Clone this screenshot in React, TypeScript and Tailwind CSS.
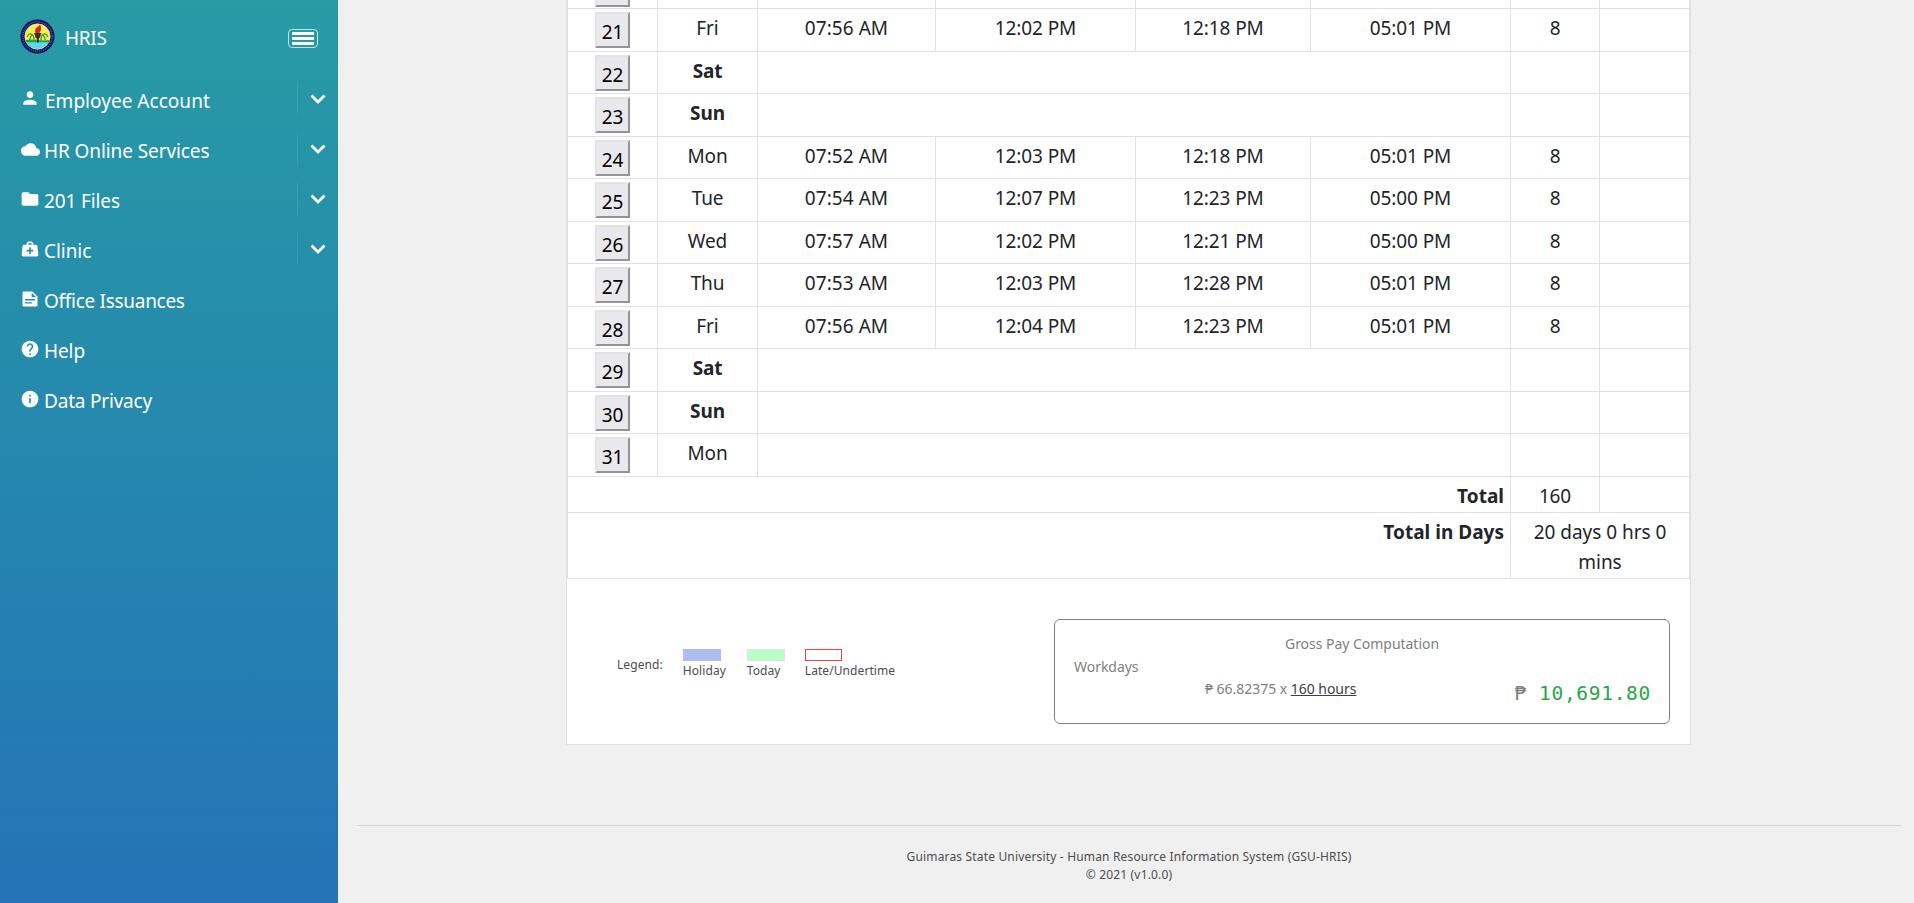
import React from "react";
import { MdPerson, MdCloud, MdFolder, MdHelp, MdInfo } from "react-icons/md";

type Day = { d: number; w: string; t?: string[] };

const days: Day[] = [
  { d: 21, w: "Fri", t: ["07:56 AM", "12:02 PM", "12:18 PM", "05:01 PM"] },
  { d: 22, w: "Sat" },
  { d: 23, w: "Sun" },
  { d: 24, w: "Mon", t: ["07:52 AM", "12:03 PM", "12:18 PM", "05:01 PM"] },
  { d: 25, w: "Tue", t: ["07:54 AM", "12:07 PM", "12:23 PM", "05:00 PM"] },
  { d: 26, w: "Wed", t: ["07:57 AM", "12:02 PM", "12:21 PM", "05:00 PM"] },
  { d: 27, w: "Thu", t: ["07:53 AM", "12:03 PM", "12:28 PM", "05:01 PM"] },
  { d: 28, w: "Fri", t: ["07:56 AM", "12:04 PM", "12:23 PM", "05:01 PM"] },
  { d: 29, w: "Sat" },
  { d: 30, w: "Sun" },
  { d: 31, w: "Mon" },
];

const line = "border-[#dee2e6]";

function Logo() {
  return (
    <svg viewBox="0 0 36 36" className="mb-[3px] h-[35px] w-[35px]">
      <circle cx="18" cy="18" r="17.5" fill="#10125e" />
      <circle cx="18" cy="18" r="15" fill="none" stroke="#9aa0c8" strokeWidth="1.800" strokeDasharray="1 1.100" opacity=".5" />
      <circle cx="18" cy="18" r="13" fill="#f4f04e" stroke="#e8ecc0" strokeWidth=".7" />
      <path d="M5.700 22h24.600a13 13 0 0 1-24.600 0z" fill="#55dce4" />
      <path d="M5.500 21.500q5.500-1 12.500 0t12.500 0l-.8 2.500h-23.400z" fill="#2e9d4b" />
      <path d="M7.500 18.500q1-4 4-3 3 1 3 6.500M28.500 18.500q-1-4-4-3-3 1-3 6.500M10 21.500q0-3 2.500-5M26 21.500q0-3-2.500-5" fill="none" stroke="#4d9a2c" strokeWidth="1.400" />
      <path d="M14.500 14.500h7.500l-1.800 5h-4zM17 19.500h2.600l-.6 5h-1.400z" fill="#3b3038" />
      <path d="M16 14.500q-1.500-4 1.500-6 2.500-1 3-3 2 3.500 1 6l-1.500 3z" fill="#d3261c" />
    </svg>
  );
}

function DocIcon() {
  return (
    <svg viewBox="0 0 24 24" className="h-5 w-5" fill="currentColor">
      <path fillRule="evenodd" d="M4.500 3H15l6 6v10.500a1.500 1.500 0 0 1-1.500 1.500h-15A1.500 1.500 0 0 1 3 19.500v-15A1.500 1.500 0 0 1 4.500 3zM14 4.600V10h5.400zM6 12v1.700h12V12zM6 15.800v1.700h8.500v-1.700z" />
    </svg>
  );
}

function BagIcon() {
  return (
    <svg viewBox="0 0 24 24" className="h-5 w-5" fill="currentColor">
      <path fillRule="evenodd" d="M10 3L8 5V7H5C3.850 7 3.120 8 3 9L2 19C1.880 20 2.540 21 4 21H20C21.460 21 22.120 20 22 19L21 9C20.880 8 20.060 7 19 7H16V5L14 3H10M10 5H14V7H10V5M11 10H13V13H16V15H13V18H11V15H8V13H11V10Z" />
    </svg>
  );
}

const menu = [
  { icon: <MdPerson className="mb-[2px] h-[22px] w-[22px]" />, label: "Employee Account", sub: true, cls: "tracking-[0.03px] pl-px" },
  { icon: <MdCloud className="h-[19px] w-[19px]" />, label: "HR Online Services", sub: true, cls: "tracking-[-0.09px]" },
  { icon: <MdFolder className="h-5 w-5" />, label: "201 Files", sub: true, cls: "tracking-[-0.12px]" },
  { icon: <BagIcon />, label: "Clinic", sub: true, cls: "tracking-[-0.05px]" },
  { icon: <DocIcon />, label: "Office Issuances", sub: false, cls: "tracking-[-0.29px]" },
  { icon: <MdHelp className="h-5 w-5" />, label: "Help", sub: false, cls: "tracking-[-0.1px]" },
  { icon: <MdInfo className="h-5 w-5" />, label: "Data Privacy", sub: false, cls: "tracking-[-0.2px]" },
];

function Sidebar() {
  return (
    <aside className="h-[903px] w-[338px] shrink-0 bg-linear-to-b from-[#289ba4] to-[#2573b6] text-white">
      <div className="flex h-[76px] items-center pl-[20px] pr-[20px]">
        <Logo />
        <span className="ml-[10px] text-[19px] tracking-[-0.3px]">HRIS</span>
        <button className="ml-auto flex h-[19px] w-[30px] flex-col items-center justify-center gap-[2px] rounded-[4px] border border-white/70">
          <span className="h-[3px] w-[22px] bg-white" />
          <span className="h-[3px] w-[22px] bg-white" />
          <span className="h-[3px] w-[22px] bg-white" />
        </button>
      </div>
      <nav>
        {menu.map((m) => (
          <div key={m.label} className="flex h-[50px] items-center pl-[20px]">
            <span className="flex w-5 shrink-0 items-center justify-center pb-[4px]">{m.icon}</span>
            <span className={"ml-[4px] text-[19px] " + m.cls}>{m.label}</span>
            {m.sub && (
              <span className="mb-[4px] ml-auto flex h-8 w-[41px] items-center justify-center border-l border-white/10">
                <svg viewBox="0 0 16 10" className="h-[10px] w-4" fill="none" stroke="white" strokeWidth="2.800">
                  <path d="M1.500 1.500L8 8l6.500-6.500" />
                </svg>
              </span>
            )}
          </div>
        ))}
      </nav>
    </aside>
  );
}

function DayButton({ n }: { n?: number }) {
  return (
    <button className="mx-auto block h-[36px] w-[35px] border-2 border-t-[#e3e3e3] border-l-[#e3e3e3] border-r-[#949494] border-b-[#949494] bg-[#e9e9ed] pt-[3px] text-center leading-[28px] text-black">
      {n}
    </button>
  );
}

function TimeTable() {
  const cell = "border p-0 align-top " + line;
  return (
    <table className="w-[1123px] table-fixed border-collapse text-center text-[19px] leading-[30px] tracking-[-0.12px] text-[#212529]">
      <colgroup>
        <col className="w-[90px]" />
        <col className="w-[100px]" />
        <col className="w-[178px]" />
        <col className="w-[200px]" />
        <col className="w-[175px]" />
        <col className="w-[200px]" />
        <col className="w-[89px]" />
        <col className="w-[90px]" />
      </colgroup>
      <tbody>
        <tr className="h-[42px]">
          <td className={cell + " pt-[4px]"}><DayButton /></td>
          {[1, 2, 3, 4, 5, 6, 7].map((k) => <td key={k} className={cell} />)}
        </tr>
        {days.map((r, i) => (
          <tr key={r.d} className={i % 2 === 0 ? "h-[43px]" : "h-[42px]"}>
            <td className={cell + (i % 2 === 0 ? " pt-[3px]" : " pt-[3px]")}><DayButton n={r.d} /></td>
            <td className={cell + " pt-[4px]" + (r.w[0] === "S" ? " font-bold" : "")}>{r.w}</td>
            {r.t
              ? r.t.map((t, k) => <td key={k} className={cell + " pt-[4px]" + (k === 0 ? " tracking-[0.05px]" : "")}>{t}</td>)
              : <td colSpan={4} className={cell} />}
            <td className={cell + " pt-[4px]"}>{r.t ? "8" : ""}</td>
            <td className={cell} />
          </tr>
        ))}
        <tr className="h-[36px]">
          <td colSpan={6} className={cell + " pt-[4px] pr-[6px] text-right font-bold tracking-[0.02px]"}>Total</td>
          <td className={cell + " pt-[4px]"}>160</td>
          <td className={cell} />
        </tr>
        <tr className="h-[66px]">
          <td colSpan={6} className={cell + " pt-[4px] pr-[6px] text-right font-bold tracking-[0.02px]"}>Total in Days</td>
          <td colSpan={2} className={cell + " px-[10px] pt-[4px] tracking-[-0.04px]"}>20 days 0 hrs 0<br />mins</td>
        </tr>
      </tbody>
    </table>
  );
}

function Legend() {
  return (
    <div className="flex text-[12px] leading-[17px] tracking-[0.08px] text-[#4d4d4d]">
      <span className="mt-[7px]">Legend:</span>
      <div className="ml-[20px] w-[64px]">
        <div className="h-[12px] w-[38px] bg-[#adbdf0]" />
        <div className="pt-px">Holiday</div>
      </div>
      <div className="w-[58px]">
        <div className="h-[12px] w-[38px] border border-[#dee2e6] bg-[#b8ffc8]" />
        <div className="pt-px">Today</div>
      </div>
      <div>
        <div className="h-[12px] w-[37px] border border-[#f8403c]" />
        <div className="pt-px">Late/Undertime</div>
      </div>
    </div>
  );
}

function GrossPay() {
  return (
    <div className="h-[105px] w-[616px] rounded-[6px] border border-[#808080] px-[19px] pt-[12px] text-[14px] leading-[23px] tracking-[-0.03px] text-[#808080]">
      <div className="text-center">Gross Pay Computation</div>
      <div>Workdays</div>
      <div className="-mt-px flex justify-between">
        <span className="ml-[131px]">
          ₱ 66.82375 x <span className="text-[#404040] underline">160 hours</span>
        </span>
        <span className="-mr-px pt-[5px] font-['DejaVu_Sans_Mono','Liberation_Mono',monospace] text-[19.500px] tracking-[0.7px]">
          ₱ <span className="text-[#28a745]">10,691.80</span>
        </span>
      </div>
    </div>
  );
}

export default function App() {
  return (
    <div className="flex h-[903px] overflow-hidden bg-[#f0f0f0] font-['Noto_Sans',sans-serif]">
      <Sidebar />
      <main className="flex flex-1 flex-col pl-[19px] pr-[13px]">
        <div className="h-[825px]">
          <div className="ml-[209px] flex h-[745px] w-[1125px] flex-col justify-end border border-t-0 border-[#dee2e6] bg-white">
            <TimeTable />
            <div className="flex h-[165px] shrink-0 items-start justify-between pl-[50px] pr-[20px] pt-[40px]">
              <div className="pt-[30px]"><Legend /></div>
              <GrossPay />
            </div>
          </div>
        </div>
        <footer className="border-t border-[#d6d6d6] pt-[22px] text-center text-[12px] leading-[18px] tracking-[0.17px] text-[#4d4d4d]">
          <div>Guimaras State University - Human Resource Information System (GSU-HRIS)</div>
          <div>© 2021 (v1.0.0)</div>
        </footer>
      </main>
    </div>
  );
}
